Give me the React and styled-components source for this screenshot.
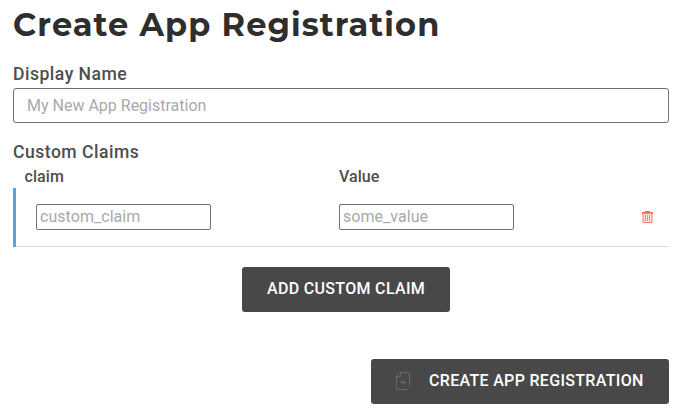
import React from "react";
import styled, { createGlobalStyle } from "styled-components";

const GlobalStyle = createGlobalStyle`
  *, *::before, *::after { box-sizing: border-box; }
  body { margin: 0; background: #fff; font-family: Roboto, sans-serif; color: #4e4e4e; }
`;

const Form = styled.form`
  display: flex;
  flex-direction: column;
  width: 656px;
  margin-left: 13px;
`;

const Title = styled.h1`
  margin: 5px 0 0;
  height: 40px;
  font: 700 32px/40px Montserrat, Inter, sans-serif;
  letter-spacing: 1.1px;
  white-space: nowrap;
  color: #2e2e2e;
`;

const Label = styled.label`
  margin-top: ${(p) => p.$gap}px;
  height: 20px;
  font-size: 17.6px;
  line-height: 20px;
  font-weight: 500;
  letter-spacing: 0.48px;
`;

const NameInput = styled.input`
  margin: 4px 0 0;
  height: 35px;
  padding: 0 13px;
  border: 1px solid #707070;
  border-radius: 3px;
  background: #fff;
  font: 400 16px Roboto, sans-serif;
  letter-spacing: 0;
  &::placeholder { color: #a9a9a9; }
`;

const ClaimsHead = styled.div`
  display: grid;
  grid-template-columns: 314.4px 1fr;
  margin-top: 6px;
  padding-left: 11.6px;
  height: 20px;
  font-size: 16px;
  line-height: 18px;
  font-weight: 500;
  letter-spacing: 0.05px;
`;

const ClaimRow = styled.div`
  display: grid;
  grid-template-columns: 303px 1fr auto;
  align-items: center;
  height: 59px;
  padding: 0 15px 1px 20px;
  border-left: 3px solid #50a5e6;
  box-shadow: inset 0 -1px 0 #dcdcdc;
`;

const ClaimInput = styled.input`
  width: 175px;
  height: 26px;
  padding: 0 3px 2px;
  border: 1px solid #707070;
  border-radius: 2px;
  background: #fff;
  font: 400 16px Roboto, sans-serif;
  letter-spacing: 0.05px;
  &::placeholder { color: #a9a9a9; }
`;

const DeleteButton = styled.button`
  display: flex;
  padding: 0;
  border: 0;
  background: none;
`;

const Button = styled.button`
  display: flex;
  align-items: center;
  align-self: ${(p) => p.$align};
  width: ${(p) => p.$width}px;
  height: 45px;
  margin-top: ${(p) => p.$gap}px;
  margin-left: ${(p) => p.$shift || 0}px;
  padding: 0 0 2px 25px;
  border: 0;
  border-radius: 3px;
  background: #484848;
  color: #fff;
  font: 500 16px Roboto, sans-serif;
  letter-spacing: 0.32px;
  white-space: nowrap;
`;

const FileSvg = styled.svg`
  margin: 0 19px 0 0;
`;

const TrashIcon = () => (
  <svg width="12" height="12" viewBox="0 0 12 12" fill="none" stroke="#ee6645">
    <path d="M1 3h9v9H1z" fill="#fde3dc" stroke="none" />
    <path d="M0 2h11" strokeWidth="2" opacity=".85" />
    <path d="M3 .5h5" />
    <path d="M1 3v8.5h9V3" opacity=".85" />
    <path d="M3.5 4v6M5.5 4v6M7.5 4v6" opacity=".7" />
  </svg>
);

const FileIcon = () => (
  <FileSvg width="14" height="18" viewBox="0 0 14 18" fill="none" stroke="#686868">
    <path d="M13.5 14.5V.5H4.5L.5 4.5V17.5H11.5M4.5 .5V4.5H.5M4 10.5h6M7 7.5v6" />
  </FileSvg>
);

export default function App() {
  return (
    <>
      <GlobalStyle />
      <Form onSubmit={(e) => e.preventDefault()}>
        <Title>Create App Registration</Title>
        <Label $gap={19} htmlFor="name">Display Name</Label>
        <NameInput id="name" placeholder="My New App Registration" />
        <Label as="div" $gap={19}>Custom Claims</Label>
        <ClaimsHead>
          <span>claim</span>
          <span>Value</span>
        </ClaimsHead>
        <ClaimRow>
          <ClaimInput aria-label="claim" placeholder="custom_claim" />
          <ClaimInput aria-label="Value" placeholder="some_value" />
          <DeleteButton type="button" aria-label="Delete claim"><TrashIcon /></DeleteButton>
        </ClaimRow>
        <Button type="button" $align="center" $width={208} $gap={20} $shift={10}>ADD CUSTOM CLAIM</Button>
        <Button type="submit" $align="flex-end" $width={298} $gap={47}>
          <FileIcon />
          CREATE APP REGISTRATION
        </Button>
      </Form>
    </>
  );
}
